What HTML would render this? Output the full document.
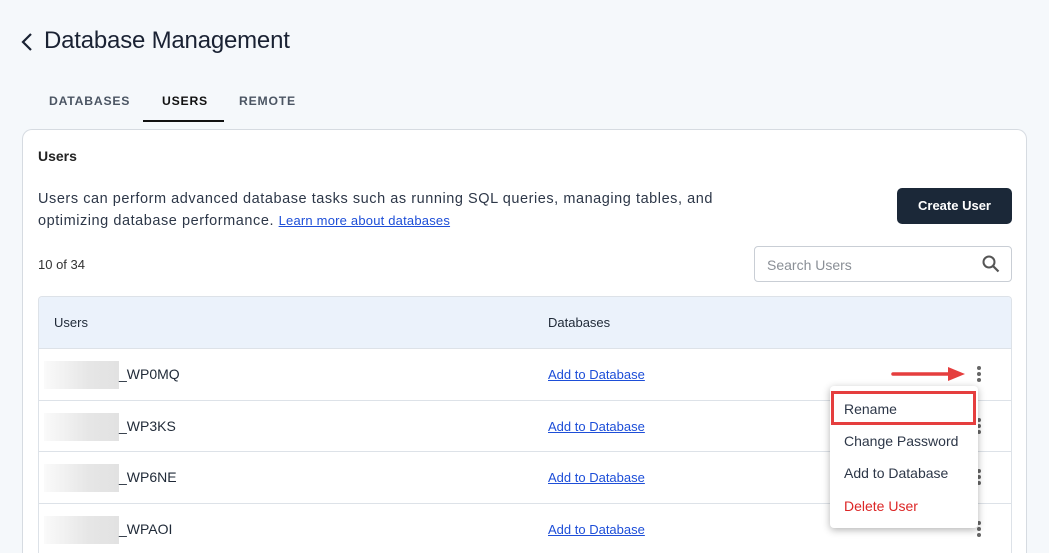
<!DOCTYPE html>
<html style="width:1049px;height:553px;overflow:hidden"><head><style>
*{box-sizing:border-box;margin:0;padding:0}
body{width:1049px;height:553px;overflow:hidden;background:#f5f8fb;font-family:"Liberation Sans",sans-serif;color:#1f2937;position:relative}
.abs{position:absolute}
h1{position:absolute;left:44px;top:27px;font-size:24px;font-weight:400;color:#1a2233;letter-spacing:-0.2px}
.tab{position:absolute;top:94px;font-size:12.2px;font-weight:700;letter-spacing:0.8px;color:#4b5563}
.card{position:absolute;left:22px;top:129px;width:1005px;height:424px;background:#fff;border:1px solid #d6dbe1;border-bottom:none;border-radius:10px 10px 0 0}
.table{position:absolute;left:38px;top:296px;width:974px;height:257px;border:1px solid #dde2e8;border-bottom:none;border-radius:4px 4px 0 0;overflow:hidden}
.th{height:52px;background:#ebf2fb;border-bottom:1px solid #dde2e8;position:relative;font-size:13px}
.row{height:51.5px;border-bottom:1px solid #dde2e8;position:relative;font-size:14px}
.blur{position:absolute;left:5px;top:12px;width:75px;height:28px;background:linear-gradient(90deg,#fafafa,#e6e6e6 60%,#e2e2e2)}
.nm{position:absolute;left:80px;top:17px}
.lk{position:absolute;left:509px;top:18px;font-size:13px;color:#1d4ed8;text-decoration:underline}
.dots{position:absolute;left:938px;top:17px;width:4px}
.dots i{display:block;width:4px;height:4px;border-radius:50%;background:#666;margin-bottom:2px}
.menu{position:absolute;left:830px;top:386px;width:148px;height:142px;background:#fff;border-radius:4px;box-shadow:0 2px 8px rgba(0,0,0,.3)}
.mi{position:absolute;left:14px;font-size:14px;color:#2d3748}
</style></head><body>
<svg class="abs" style="left:20px;top:32px" width="14" height="20"><path d="M11 2 L3 10 L11 18" stroke="#1a2233" stroke-width="2.2" fill="none"/></svg>
<h1>Database Management</h1>
<div class="tab" style="left:49px">DATABASES</div>
<div class="tab" style="left:162px;color:#111">USERS</div>
<div class="tab" style="left:239px">REMOTE</div>
<div class="abs" style="left:143px;top:120px;width:81px;height:2px;background:#111"></div>
<div class="card"></div>
<div class="abs" style="left:38px;top:148px;font-size:14px;font-weight:700;color:#222">Users</div>
<div class="abs" style="left:38px;top:188px;font-size:14.5px;line-height:22px;color:#2d3748;width:720px;letter-spacing:0.55px">Users can perform advanced database tasks such as running SQL queries, managing tables, and<br>optimizing database performance. <span style="font-size:13px;letter-spacing:0.2px;color:#1d4ed8;text-decoration:underline">Learn more about databases</span></div>
<div class="abs" style="left:897px;top:188px;width:115px;height:36px;background:#1b2838;border-radius:5px;color:#fff;font-size:13px;font-weight:700;text-align:center;line-height:36px">Create User</div>
<div class="abs" style="left:38px;top:257px;font-size:13px;color:#333">10 of 34</div>
<div class="abs" style="left:754px;top:246px;width:258px;height:36px;border:1px solid #c9ced5;border-radius:4px;background:#fff"><span style="position:absolute;left:12px;top:10px;font-size:14px;color:#8a8f96">Search Users</span>
<svg style="position:absolute;right:11px;top:8px" width="18" height="18"><circle cx="7" cy="7" r="5.5" stroke="#555" stroke-width="2" fill="none"/><path d="M11 11 L16.5 16.5" stroke="#555" stroke-width="2.2"/></svg></div>
<div class="table">
<div class="th"><span style="position:absolute;left:15px;top:18px">Users</span><span style="position:absolute;left:509px;top:18px">Databases</span></div>
<div class="row"><div class="blur"></div><span class="nm">_WP0MQ</span><span class="lk">Add to Database</span><div class="dots"><i></i><i></i><i></i></div></div>
<div class="row"><div class="blur"></div><span class="nm">_WP3KS</span><span class="lk">Add to Database</span><div class="dots"><i></i><i></i><i></i></div></div>
<div class="row"><div class="blur"></div><span class="nm">_WP6NE</span><span class="lk">Add to Database</span><div class="dots"><i></i><i></i><i></i></div></div>
<div class="row"><div class="blur"></div><span class="nm">_WPAOI</span><span class="lk">Add to Database</span><div class="dots"><i></i><i></i><i></i></div></div>
</div>
<svg class="abs" style="left:890px;top:365px" width="80" height="18"><path d="M3 9 H62" stroke="#e53e3e" stroke-width="3.5" stroke-linecap="round"/><path d="M58 2 L75 9 L58 16 Z" fill="#e53e3e"/></svg>
<div class="menu">
<div class="mi" style="top:15px">Rename</div>
<div class="mi" style="top:47px">Change Password</div>
<div class="mi" style="top:79px">Add to Database</div>
<div class="mi" style="top:112px;color:#dc2626">Delete User</div>
</div>
<div class="abs" style="left:831px;top:391px;width:145px;height:34px;border:3px solid #e53e3e"></div>
</body></html>
